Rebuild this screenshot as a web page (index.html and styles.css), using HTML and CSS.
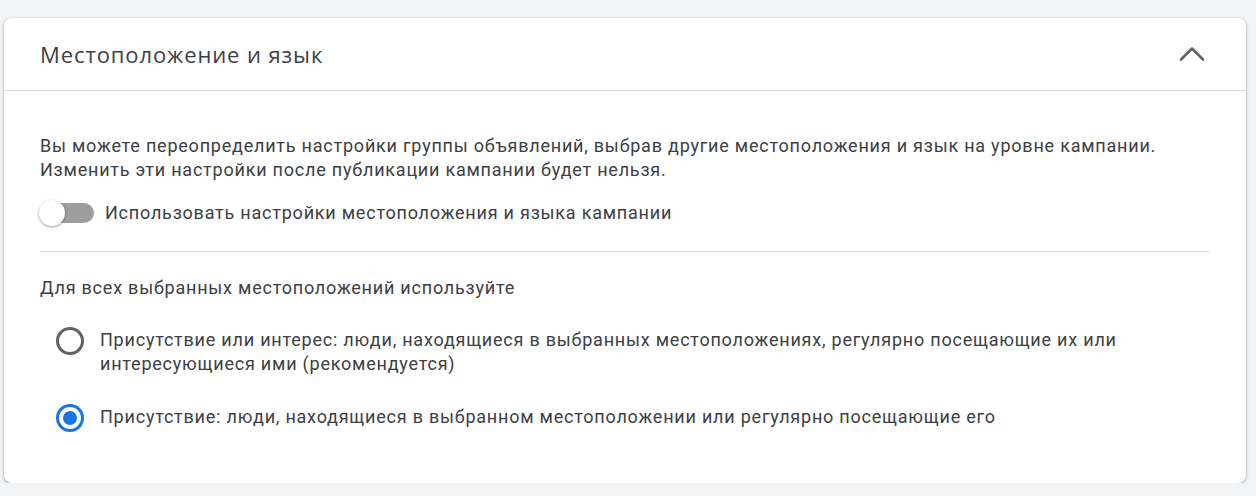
FILE: index.html
```html
<!DOCTYPE html>
<html lang="ru">
<head>
    <meta charset="UTF-8">
    <title>Местоположение и язык</title>
    <link rel="stylesheet" href="styles.css">
</head>
<body>
    <div class="card">
        <div class="card-header">
            <h2>Местоположение и язык</h2>
            <svg class="chevron" width="26" height="16" viewBox="0 0 26 16">
                <polyline points="2,13.5 13,2.5 24,13.5" fill="none" stroke="#5f6368" stroke-width="2.6" stroke-linecap="round" stroke-linejoin="round"/>
            </svg>
        </div>
        <div class="card-body">
            <p class="intro">Вы можете переопределить настройки группы объявлений, выбрав другие местоположения и язык на уровне кампании. Изменить эти настройки после публикации кампании будет нельзя.</p>
            <label class="toggle-row">
                <span class="toggle"><span class="knob"></span></span>
                <span>Использовать настройки местоположения и языка кампании</span>
            </label>
            <div class="divider"></div>
            <p class="subtitle">Для всех выбранных местоположений используйте</p>
            <div class="radio-list">
                <label class="radio-row">
                    <span class="radio"></span>
                    <span class="radio-text">Присутствие или интерес: люди, находящиеся в выбранных местоположениях, регулярно посещающие их или интересующиеся ими (рекомендуется)</span>
                </label>
                <label class="radio-row">
                    <span class="radio checked"></span>
                    <span class="radio-text">Присутствие: люди, находящиеся в выбранном местоположении или регулярно посещающие его</span>
                </label>
            </div>
        </div>
    </div>
</body>
</html>
```

FILE: styles.css
```css
body {
    margin: 0;
    background: #f1f3f4;
    font-family: Roboto, 'Liberation Sans', sans-serif;
    color: #3c4043;
}

.card {
    margin: 18px 10px 0 4px;
    width: 1242px;
    height: 465px;
    background: #fff;
    border-radius: 8px;
    box-shadow: 0 1px 2px rgba(60, 64, 67, 0.3), 0 1px 3px 1px rgba(60, 64, 67, 0.15);
    box-sizing: border-box;
}

.card-header {
    height: 72px;
    display: flex;
    align-items: center;
    justify-content: space-between;
    padding: 0 41px 0 36px;
    border-bottom: 1px solid #dadce0;
}

.card-header h2 {
    margin: 0;
    font-family: 'Open Sans', sans-serif;
    font-weight: 400;
    font-size: 22px;
    letter-spacing: 0.9px;
    color: #3c4043;
}

.chevron {
    margin-top: 0;
}

.card-body {
    padding: 43px 36px 0 36px;
    font-size: 18px;
    letter-spacing: 0.78px;
}

.intro {
    margin: 0;
    line-height: 24px;
    max-width: 1170px;
}

.toggle-row {
    display: flex;
    align-items: center;
    gap: 11px;
    margin-top: 20px;
}

.toggle {
    position: relative;
    flex: none;
    width: 52px;
    height: 20px;
    margin-left: 2px;
    border-radius: 10px;
    background: #9e9e9e;
}

.knob {
    position: absolute;
    left: -3px;
    top: -3px;
    width: 26px;
    height: 26px;
    border-radius: 50%;
    background: #fff;
    box-shadow: 0 1px 3px rgba(0, 0, 0, 0.4);
}

.divider {
    height: 1px;
    background: #dadce0;
    margin-top: 28px;
    width: 1170px;
}

.subtitle {
    margin: 24px 0 0 0;
    line-height: 24px;
}

.radio-list {
    display: flex;
    flex-direction: column;
    gap: 29px;
    margin-top: 28px;
}

.radio-row {
    display: flex;
    align-items: flex-start;
    gap: 16px;
    padding-left: 16px;
    line-height: 24px;
}

.radio {
    flex: none;
    position: relative;
    width: 28px;
    height: 28px;
    margin-top: -1px;
    border: 3px solid #5f6368;
    border-radius: 50%;
    box-sizing: border-box;
}

.radio.checked {
    border-color: #1a73e8;
}

.radio.checked::after {
    content: "";
    position: absolute;
    left: 4px;
    top: 4px;
    width: 14px;
    height: 14px;
    border-radius: 50%;
    background: #1a73e8;
}

.radio-text {
    max-width: 1060px;
}
```
